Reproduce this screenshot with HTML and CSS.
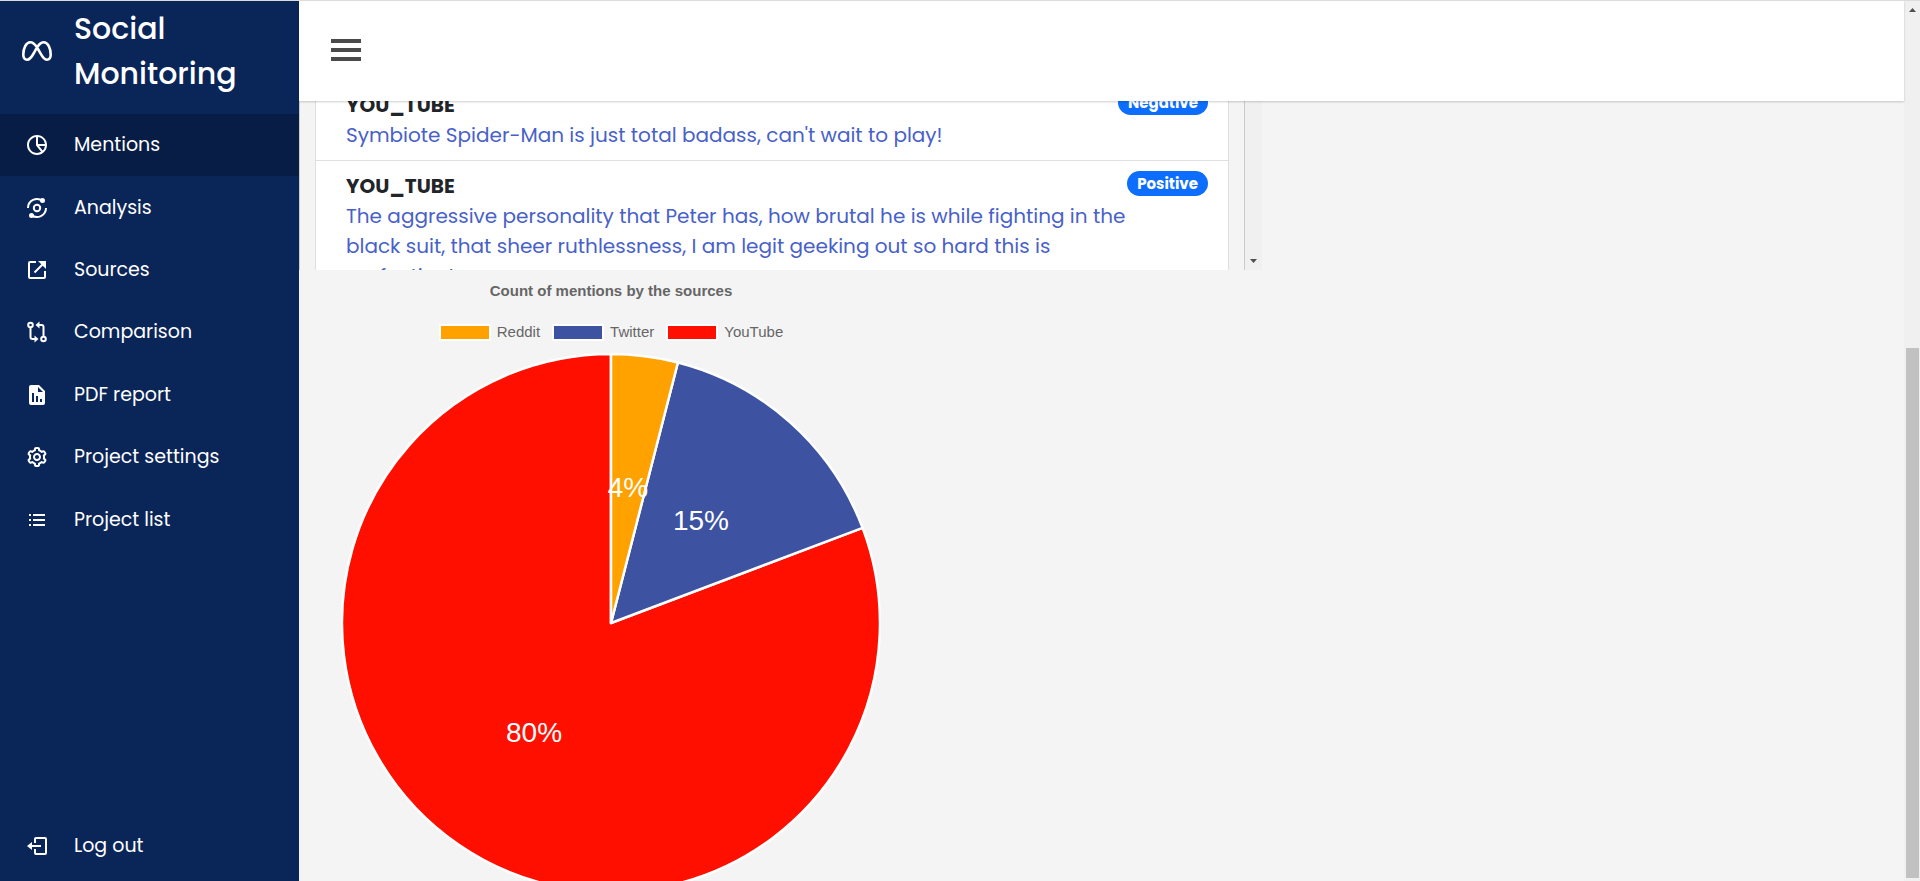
FILE: index.html
```html
<!DOCTYPE html>
<html lang="en">
<head>
<meta charset="utf-8">
<title>Social Monitoring</title>
<link rel="stylesheet" href="styles.css">
</head>
<body>
<div class="app">
  <aside class="sidebar">
    <div class="brand">
      <svg class="brand-icon" viewBox="0 0 32 24" fill="none" stroke="currentColor" stroke-width="2.6" stroke-linejoin="round"><path d="M16 8.500C13.500 4.500 11.500 3.300 9.300 3.300C5 3.300 2.300 9.500 2.300 15.500C2.300 19 3.800 20.700 6.200 20.700C9 20.700 11 17.500 13.200 13.500C15.800 8.500 18.500 3.300 22.700 3.300C27 3.300 29.700 9.500 29.700 15.500C29.700 19 28.200 20.700 25.800 20.700C21.800 20.700 19.500 13.500 16 8.500Z"/></svg>
      <span class="brand-name">Social Monitoring</span>
    </div>
    <nav class="menu">
      <a class="item active" href="#"><svg class="icon" viewBox="0 0 24 24" fill="currentColor"><path d="M12 2C6.486 2 2 6.486 2 12s4.486 10 10 10 10-4.486 10-10S17.514 2 12 2zm7.931 9H13V4.069A8.008 8.008 0 0 1 19.931 11zM4 12c0-4.072 3.061-7.436 7-7.931V12c0 .257.103.502.276.688L16.100 18.870A7.946 7.946 0 0 1 12 20c-4.411 0-8-3.589-8-8zm13.670 5.620L14.100 13h5.831a7.954 7.954 0 0 1-2.261 4.620z"/></svg><span>Mentions</span></a>
      <a class="item" href="#"><svg class="icon" viewBox="0 0 24 24" fill="none" stroke="currentColor" stroke-width="2"><circle cx="12" cy="12" r="3.200"/><path d="M3 12a9 9 0 0 1 14.500-7.100M21 12a9 9 0 0 1-14.500 7.100"/><circle cx="17.500" cy="4.500" r="1.500" fill="currentColor"/><circle cx="6.500" cy="19.500" r="1.500" fill="currentColor"/></svg><span>Analysis</span></a>
      <a class="item" href="#"><svg class="icon" viewBox="0 0 24 24" fill="none" stroke="currentColor" stroke-width="2"><path d="M11 4H5a1 1 0 0 0-1 1v14a1 1 0 0 0 1 1h14a1 1 0 0 0 1-1v-6M9.500 14.500 18 6"/><path d="M13 3h8v8z" fill="currentColor" stroke="none"/></svg><span>Sources</span></a>
      <a class="item" href="#"><svg class="icon" viewBox="0 0 24 24" fill="none" stroke="currentColor" stroke-width="2"><circle cx="5.500" cy="5" r="2.300"/><circle cx="18.500" cy="19" r="2.300"/><path d="M5.500 7.500V17a2 2 0 0 0 2 2H10M18.500 16.500V7a2 2 0 0 0-2-2H14"/><path d="M9.500 15.500v7l4-3.500zM14.500 1.500v7l-4-3.500z" fill="currentColor" stroke="none"/></svg><span>Comparison</span></a>
      <a class="item" href="#"><svg class="icon" viewBox="0 0 24 24" fill="currentColor"><path fill-rule="evenodd" d="M14 2H6a2 2 0 0 0-2 2v16a2 2 0 0 0 2 2h12a2 2 0 0 0 2-2V8zM9 19H7v-9h2zm4 0h-2v-6h2zm4 0h-2v-3h2zM13 9V4l5 5z"/></svg><span>PDF report</span></a>
      <a class="item" href="#"><svg class="icon" viewBox="0 0 24 24" fill="currentColor"><path d="M12 16c2.206 0 4-1.794 4-4s-1.794-4-4-4-4 1.794-4 4 1.794 4 4 4zm0-6c1.084 0 2 .916 2 2s-.916 2-2 2-2-.916-2-2 .916-2 2-2z"/><path d="m2.845 16.136 1 1.730c.531.917 1.809 1.261 2.730.730l.529-.306A8.100 8.100 0 0 0 9 19.402V20c0 1.103.897 2 2 2h2c1.103 0 2-.897 2-2v-.598a8.132 8.132 0 0 0 1.896-1.111l.529.306c.923.530 2.198.188 2.731-.731l.999-1.729a2.001 2.001 0 0 0-.731-2.732l-.505-.292a7.718 7.718 0 0 0 0-2.224l.505-.292a2.002 2.002 0 0 0 .731-2.732l-.999-1.729c-.531-.920-1.808-1.265-2.731-.732l-.529.306A8.100 8.100 0 0 0 15 4.598V4c0-1.103-.897-2-2-2h-2c-1.103 0-2 .897-2 2v.598a8.132 8.132 0 0 0-1.896 1.111l-.529-.306c-.924-.531-2.200-.187-2.731.732l-.999 1.729a2.001 2.001 0 0 0 .731 2.732l.505.292a7.683 7.683 0 0 0 0 2.223l-.505.292a2.003 2.003 0 0 0-.731 2.733zm3.326-2.758A5.703 5.703 0 0 1 6 12c0-.462.058-.926.170-1.378a.999.999 0 0 0-.470-1.108l-1.123-.650.998-1.729 1.145.662a.997.997 0 0 0 1.188-.142 6.071 6.071 0 0 1 2.384-1.399A1 1 0 0 0 11 5.300V4h2v1.300a1 1 0 0 0 .708.956 6.083 6.083 0 0 1 2.384 1.399.999.999 0 0 0 1.188.142l1.144-.661 1 1.729-1.124.649a1 1 0 0 0-.470 1.108c.112.452.170.916.170 1.378 0 .461-.058.925-.171 1.378a1 1 0 0 0 .471 1.108l1.123.649-.998 1.729-1.145-.661a.996.996 0 0 0-1.188.142 6.071 6.071 0 0 1-2.384 1.399A1 1 0 0 0 13 18.700l.002 1.300H11v-1.300a1 1 0 0 0-.708-.956 6.083 6.083 0 0 1-2.384-1.399.992.992 0 0 0-1.188-.141l-1.144.662-1-1.729 1.124-.651a1 1 0 0 0 .471-1.108z"/></svg><span>Project settings</span></a>
      <a class="item" href="#"><svg class="icon" viewBox="0 0 24 24" fill="currentColor"><path d="M4 6h2v2H4zm0 5h2v2H4zm0 5h2v2H4zM8 6h12v2H8zm0 5h12v2H8zm0 5h12v2H8z"/></svg><span>Project list</span></a>
    </nav>
    <a class="item logout" href="#"><svg class="icon" viewBox="0 0 24 24" fill="currentColor"><path d="m2 12 5 4v-3h9v-2H7V8z"/><path d="M20 3H11a2 2 0 0 0-2 2v4h2V5h9v14h-9v-4H9v4a2 2 0 0 0 2 2h9a2 2 0 0 0 2-2V5a2 2 0 0 0-2-2z"/></svg><span>Log out</span></a>
  </aside>

  <main class="main">
    <header class="topbar">
      <button class="toggle" type="button" aria-label="Toggle menu"><span></span><span></span><span></span></button>
    </header>
    <section class="mentions">
      <ol class="list">
        <li class="mention">
          <div class="body"><strong class="source">YOU_TUBE</strong><a class="quote" href="#">Symbiote Spider-Man is just total badass, can't wait to play!</a></div>
          <span class="badge">Negative</span>
        </li>
        <li class="mention">
          <div class="body"><strong class="source">YOU_TUBE</strong><a class="quote" href="#">The aggressive personality that Peter has, how brutal he is while fighting in the<br>black suit, that sheer ruthlessness, I am legit geeking out so hard this is<br>perfection!</a></div>
          <span class="badge">Positive</span>
        </li>
      </ol>
      <div class="list-scroll"><svg class="arrow" viewBox="0 0 7 4"><path d="M0 0h7L3.500 4z"/></svg></div>
    </section>
    <figure class="chart">
      <figcaption class="chart-title">Count of mentions by the sources</figcaption>
      <ul class="legend">
        <li><span class="swatch reddit"></span>Reddit</li>
        <li><span class="swatch twitter"></span>Twitter</li>
        <li><span class="swatch youtube"></span>YouTube</li>
      </ul>
      <svg class="pie" viewBox="-270 -270 540 540" role="img" aria-label="Reddit 4%, Twitter 15%, YouTube 80%">
        <g stroke="#fff" stroke-width="2.500" stroke-linejoin="round">
          <path class="youtube" d="M0 0L251.600-95.100A269 269 0 1 1 0-269Z"/>
          <path class="twitter" d="M0 0L66.900-260.500A269 269 0 0 1 251.600-95.100Z"/>
          <path class="reddit" d="M0 0V-269A269 269 0 0 1 66.900-260.500Z"/>
        </g>
        <g class="pie-label">
          <text x="17" y="-126">4%</text>
          <text x="90" y="-93">15%</text>
          <text x="-77" y="119">80%</text>
        </g>
      </svg>
    </figure>
  </main>

  <div class="page-scroll">
    <svg class="arrow" viewBox="0 0 7 4"><path d="M0 4h7L3.500 0z"/></svg>
    <div class="thumb"></div>
  </div>
</div>
</body>
</html>
```
FILE: styles.css
```css
* { box-sizing: border-box; }

body {
  margin: 0;
  background: #f4f4f4;
  color: #212529;
  font-family: Poppins, Inter, sans-serif;
}

.app {
  display: flex;
  height: 100vh;
  overflow: hidden;
  border-top: 1px solid #dcdcdc;
}

/* Sidebar */
.sidebar {
  display: flex;
  flex-direction: column;
  flex: none;
  width: 299px;
  padding-bottom: 4px;
  background: #0a2558;
  color: #fff;
}

.brand {
  display: flex;
  align-items: center;
  height: 113px;
  padding: 0 20px 14px 21px;
  gap: 21px;
}

.brand-icon { flex: none; width: 32px; height: 24px; }

.brand-name {
  font-size: 30px;
  font-weight: 500;
  line-height: 45px;
}

.menu {
  display: grid;
  grid-auto-rows: 1fr;
  min-height: 437px;
}

.item {
  display: flex;
  align-items: center;
  min-height: 62px;
  padding-left: 25px;
  gap: 25px;
  color: #fff;
  font-size: 19px;
  line-height: 28px;
  text-decoration: none;
}

.item.active { background: #081d45; }
.icon { flex: none; width: 24px; height: 24px; }
.logout { margin-top: auto; }

/* Main column */
.main {
  display: flex;
  flex-direction: column;
  flex: 1;
  min-width: 0;
}

.topbar {
  z-index: 1;
  flex: none;
  display: flex;
  align-items: center;
  height: 100px;
  padding: 0 32px 2px;
  background: #fff;
  box-shadow: 0 1px 2px rgba(0, 0, 0, 0.2);
}

.toggle {
  display: grid;
  gap: 5px;
  width: 30px;
  padding: 0;
  border: 0;
  background: none;
}

.toggle span { height: 4px; background: #4a4a4a; }

/* The list is scrolled up under the top bar */
.mentions {
  display: flex;
  flex: none;
  width: 963px;
  height: 190px;
  margin-top: -21px;
  overflow: hidden;
  border-left: 1px solid #ccc;
}

.list {
  flex: 1;
  align-self: flex-start;
  margin: 0;
  padding: 0 15px;
  list-style: none;
}

.mention {
  display: flex;
  align-items: flex-start;
  padding: 10px 20px 10px 30px;
  border: 1px solid #dfdfdf;
  border-top: 0;
  background: #fff;
}

.body { flex: 1; font-size: 20px; line-height: 30px; }
.source { display: block; font-weight: 700; }
.quote { display: block; color: #4861c9; font-weight: 400; text-decoration: none; white-space: nowrap; }

.badge {
  padding: 5px 10px;
  border-radius: 13px;
  background: #0d6efd;
  color: #fff;
  font-size: 15px;
  font-weight: 700;
  line-height: 15px;
}

.list-scroll {
  display: flex;
  align-items: flex-end;
  justify-content: center;
  flex: none;
  width: 18px;
  padding-bottom: 7px;
  border-left: 1px solid #ccc;
  background: #f0f0f0;
}

.arrow { width: 7px; height: 4px; fill: #505050; }

/* Chart */
.chart {
  display: flex;
  flex-direction: column;
  align-items: center;
  flex: none;
  width: 624px;
  margin: 0;
  padding-top: 12px;
  color: #666;
  font-family: "Liberation Sans", Arial, sans-serif;
  font-size: 15px;
}

.chart-title { font-weight: 700; line-height: 18px; }

.legend {
  display: flex;
  gap: 12px;
  margin: 22px 0 11px;
  padding: 0;
  list-style: none;
  line-height: 20px;
}

.legend li { display: flex; align-items: center; gap: 6px; }
.swatch { width: 52px; height: 17px; border: 2px solid #fff; }

.reddit { background: #ffa200; fill: #ffa200; }
.twitter { background: #3d52a0; fill: #3d52a0; }
.youtube { background: #ff0f00; fill: #ff0f00; }

.pie { flex: none; width: 540px; height: 540px; }
.pie-label { fill: #fff; font-size: 28px; text-anchor: middle; }

/* Page scroll track */
.page-scroll {
  display: flex;
  flex-direction: column;
  align-items: center;
  flex: none;
  width: 16px;
  padding: 7px 1px 0;
  background: #f0f0f0;
}

.thumb { width: 13px; height: 530px; margin-top: 336px; background: #c1c1c1; }
```
